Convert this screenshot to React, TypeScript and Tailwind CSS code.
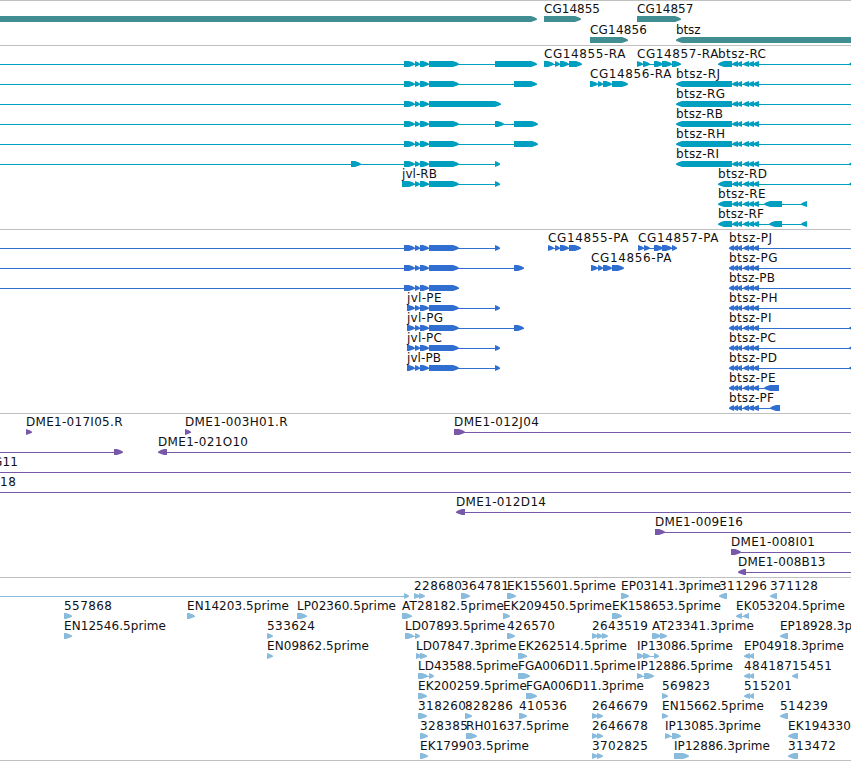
type Label = [start: number, end: number, text: string];
type Span = [start: number, end: number];
interface Row {
  y: number;
  labels?: Label[];
  right?: Span[];
  left?: Span[];
  lines?: Span[];
}
interface TrackData {
  name: string;
  top: number;
  height: number;
  fill: string;
  rows: Row[];
}

const jvl: Span[] = [[415, 420], [420, 429], [429, 459]];
const jvlLong: Span[] = [[404, 415], ...jvl];
const jvlShort: Span[] = [[407, 415], ...jvl];
const btszTail: Span[] = [[743, 749], [748, 754], [753, 759]];
const btszR: Span[] = [[732, 738], [737, 742], ...btszTail];
const btszP: Span[] = [[729, 734], [733, 738], [737, 742], ...btszTail];

const tracks: TrackData[] = [
  {
    name: "genes", top: 0, height: 45, fill: "fill-[#408e92]",
    rows: [
      { y: 19, labels: [[544, 600, "CG14855"], [637, 693.5, "CG14857"]], right: [[-10, 537], [544, 581], [637, 681]] },
      { y: 40, labels: [[590, 647, "CG14856"], [676, 700.5, "btsz"]], right: [[590, 628]], left: [[676, 860]] },
    ],
  },
  {
    name: "transcripts", top: 45, height: 184, fill: "fill-[#009ebf]",
    rows: [
      {
        y: 64,
        labels: [[544, 625.5, "CG14855-RA"], [637, 718.5, "CG14857-RA"], [718, 766, "btsz-RC"]],
        right: [...jvlLong, [495, 537], [544, 554], [555, 560], [560, 569], [569, 582], [637, 643], [643, 650], [654, 663], [662, 672], [672, 681]],
        left: [[718, 732], ...btszR, [849, 858]],
        lines: [[0, 537], [544, 580], [637, 680], [720, 851]],
      },
      {
        y: 84,
        labels: [[590, 671.5, "CG14856-RA"], [676, 720, "btsz-RJ"]],
        right: [...jvlLong, [514, 537], [590, 598], [598, 603], [603, 612], [612, 628]],
        left: [[676, 732], ...btszR],
        lines: [[0, 537], [590, 625], [680, 851]],
      },
      { y: 104, labels: [[676, 725, "btsz-RG"]], right: [[404, 415], [415, 420], [420, 429], [429, 501]], left: [[676, 732], ...btszR], lines: [[0, 498], [680, 851]] },
      { y: 124, labels: [[676, 723, "btsz-RB"]], right: [...jvlLong, [495, 504], [514, 538]], left: [[676, 732], ...btszR], lines: [[0, 537], [680, 851]] },
      { y: 144, labels: [[676, 725, "btsz-RH"]], right: [...jvlLong, [514, 538]], left: [[676, 732], ...btszR], lines: [[0, 537], [680, 851]] },
      { y: 164, labels: [[676, 719, "btsz-RI"]], right: [[351, 361], ...jvlLong, [495, 500]], left: [[676, 732], ...btszR, [849, 858]], lines: [[0, 500], [680, 851]] },
      { y: 184, labels: [[402, 437, "jvl-RB"], [718, 767, "btsz-RD"]], right: [[402, 415], ...jvl, [495, 500]], left: [[718, 732], ...btszR, [849, 858]], lines: [[402, 500], [720, 851]] },
      { y: 204, labels: [[718, 765.5, "btsz-RE"]], left: [[718, 732], ...btszR, [764, 782], [801, 807]], lines: [[720, 807]] },
      { y: 224, labels: [[718, 764, "btsz-RF"]], left: [[718, 732], ...btszR, [769, 782], [801, 807]], lines: [[720, 807]] },
    ],
  },
  {
    name: "proteins", top: 229, height: 184, fill: "fill-[#306ecf]",
    rows: [
      {
        y: 248,
        labels: [[548, 628.5, "CG14855-PA"], [638, 718.5, "CG14857-PA"], [729, 772, "btsz-PJ"]],
        right: [...jvlLong, [495, 500], [548, 554], [555, 560], [560, 569], [569, 581], [638, 644], [644, 650], [654, 663], [662, 672], [672, 677]],
        left: btszP,
        lines: [[0, 500], [548, 580], [638, 676], [730, 851]],
      },
      {
        y: 268,
        labels: [[591, 671.5, "CG14856-PA"], [729, 777.5, "btsz-PG"]],
        right: [...jvlLong, [514, 524], [591, 598], [598, 603], [603, 612], [612, 624]],
        left: btszP,
        lines: [[0, 524], [591, 622], [730, 851]],
      },
      { y: 288, labels: [[729, 775, "btsz-PB"]], right: jvlLong, left: btszP, lines: [[0, 459], [730, 851]] },
      { y: 308, labels: [[407, 441.5, "jvl-PE"], [729, 777.5, "btsz-PH"]], right: [...jvlShort, [495, 500]], left: btszP, lines: [[407, 500], [730, 851]] },
      { y: 328, labels: [[407, 443, "jvl-PG"], [729, 771.5, "btsz-PI"]], right: [...jvlShort, [514, 524]], left: [...btszP, [849, 858]], lines: [[407, 524], [730, 851]] },
      { y: 348, labels: [[407, 442, "jvl-PC"], [729, 776, "btsz-PC"]], right: [...jvlShort, [495, 500]], left: [...btszP, [849, 858]], lines: [[407, 500], [730, 851]] },
      { y: 368, labels: [[407, 441, "jvl-PB"], [729, 777, "btsz-PD"]], right: [...jvlShort, [495, 500]], left: [...btszP, [849, 858]], lines: [[407, 500], [730, 851]] },
      { y: 388, labels: [[729, 775.5, "btsz-PE"]], left: [...btszP, [764, 779]], lines: [[730, 779]] },
      { y: 408, labels: [[729, 774, "btsz-PF"]], left: [...btszP, [770, 780]], lines: [[730, 780]] },
    ],
  },
  {
    name: "clones", top: 413, height: 164, fill: "fill-[#7858a8]",
    rows: [
      { y: 432, labels: [[26, 122.5, "DME1-017I05.R"], [185, 287.5, "DME1-003H01.R"], [454, 539, "DME1-012J04"]], right: [[26, 32], [185, 191], [454, 465]], lines: [[460, 851]] },
      { y: 452, labels: [[158, 248, "DME1-021O10"]], right: [[114, 123]], left: [[158, 167]], lines: [[0, 120], [160, 851]] },
      { y: 472, labels: [[-7, 18, "G11"]], lines: [[0, 851]] },
      { y: 492, labels: [[0, 16, "18"]], lines: [[0, 851]] },
      { y: 512, labels: [[456, 546, "DME1-012D14"]], left: [[456, 465]], lines: [[460, 851]] },
      { y: 532, labels: [[655, 743, "DME1-009E16"]], right: [[655, 665]], lines: [[657, 851]] },
      { y: 552, labels: [[731, 815, "DME1-008I01"]], right: [[731, 741]], lines: [[733, 851]] },
      { y: 572, labels: [[738, 825.5, "DME1-008B13"]], left: [[738, 746]], lines: [[742, 851]] },
    ],
  },
  {
    name: "ests", top: 577, height: 183, fill: "fill-[#88bbdc]",
    rows: [
      {
        y: 596,
        labels: [[414, 462, "228680"], [461, 509, "364781"], [507, 616, "EK155601.5prime"], [621, 721, "EP03141.3prime"], [719, 767, "311296"], [770, 818, "371128"]],
        right: [[404, 409], [414, 420], [419, 425], [461, 470], [507, 516], [621, 629]],
        left: [[719, 727], [770, 777]],
        lines: [[0, 408]],
      },
      {
        y: 616,
        labels: [[64, 112, "557868"], [187, 289, "EN14203.5prime"], [297, 396, "LP02360.5prime"], [402, 504, "AT28182.5prime"], [503, 612, "EK209450.5prime"], [612, 721, "EK158653.5prime"], [736, 845, "EK053204.5prime"]],
        right: [[64, 72], [187, 195], [297, 307], [402, 412], [503, 510], [612, 622]],
        left: [[736, 742], [743, 749]],
        lines: [[738, 748]],
      },
      {
        y: 636,
        labels: [[64, 166, "EN12546.5prime"], [267, 315, "533624"], [405, 505.5, "LD07893.5prime"], [507, 555, "426570"], [592, 648, "2643519"], [652, 754, "AT23341.3prime"], [780, 852, "EP18928.3p"]],
        right: [[64, 72], [267, 273], [405, 414], [415, 420], [507, 515], [592, 598], [597, 603], [602, 608], [652, 661], [660, 667]],
        left: [[780, 788]],
        lines: [[407, 418], [592, 606], [654, 665]],
      },
      {
        y: 656,
        labels: [[267, 369, "EN09862.5prime"], [416, 516.5, "LD07847.3prime"], [518, 627, "EK262514.5prime"], [637, 733, "IP13086.5prime"], [744, 844, "EP04918.3prime"]],
        right: [[267, 273], [416, 422], [420, 427], [518, 527], [637, 644], [643, 650], [654, 659]],
        left: [[744, 750], [749, 754]],
        lines: [[638, 657]],
      },
      {
        y: 676,
        labels: [[418, 518.5, "LD43588.5prime"], [518, 636, "FGA006D11.5prime"], [637, 733, "IP12886.5prime"], [744, 792, "484187"], [792, 832, "15451"]],
        right: [[418, 428], [429, 434], [518, 530], [637, 643], [644, 654]],
        left: [[744, 750], [749, 754], [792, 798]],
        lines: [[420, 432], [638, 652]],
      },
      {
        y: 696,
        labels: [[418, 527, "EK200259.5prime"], [526, 644, "FGA006D11.3prime"], [662, 710, "569823"], [744, 792, "515201"]],
        right: [[418, 427], [526, 537], [662, 668]],
        left: [[744, 750], [749, 754]],
      },
      {
        y: 716,
        labels: [[418, 466, "318260"], [465, 513, "828286"], [519, 567, "410536"], [592, 648, "2646679"], [662, 764, "EN15662.5prime"], [780, 828, "514239"]],
        right: [[418, 427], [465, 472], [519, 527], [592, 598], [597, 603], [662, 668]],
        left: [[780, 788]],
      },
      {
        y: 736,
        labels: [[420, 468, "328385"], [466, 569, "RH01637.5prime"], [592, 648, "2646678"], [665, 761, "IP13085.3prime"], [788, 851, "EK194330"]],
        right: [[420, 428], [466, 477], [592, 598], [597, 603], [665, 671], [672, 681]],
        left: [[788, 798]],
        lines: [[667, 678]],
      },
      {
        y: 756,
        labels: [[420, 529, "EK179903.5prime"], [592, 648, "3702825"], [674, 770, "IP12886.3prime"], [788, 836, "313472"]],
        right: [[420, 428], [592, 598], [597, 603], [674, 689]],
        left: [[788, 798]],
      },
    ],
  },
];

// Feature box whose last few pixels round off to a point in the strand's direction.
function Feature({ span: [a, b], y, left }: { span: Span; y: number; left?: boolean }) {
  const tip = left ? a : b;
  const back = left ? b : a;
  const dir = left ? -1 : 1;
  const head = Math.min(6, b - a);
  const neck = tip - dir * head;
  const mid = tip - dir * head * 0.4;
  return (
    <polygon
      points={`${back},${y - 3} ${neck},${y - 3} ${mid},${y - 1.8} ${tip},${y - 0.3} ${tip},${y + 0.7} ${mid},${y + 1.8} ${neck},${y + 3} ${back},${y + 3}`}
    />
  );
}

function Track({ track }: { track: TrackData }) {
  return (
    <section className="border-t border-[#c0c0c0]" aria-label={track.name}>
      <svg
        className={`block overflow-visible ${track.fill}`}
        width={851}
        height={track.height - 1}
        viewBox={`0 ${track.top + 1} 851 ${track.height - 1}`}
      >
        {track.rows.map((row) => (
          <g key={row.y}>
            {row.lines?.map(([a, b], i) => <rect key={i} x={a} y={row.y} width={b - a} height={1} />)}
            {row.right?.map((s, i) => <Feature key={i} span={s} y={row.y} />)}
            {row.left?.map((s, i) => <Feature key={i} span={s} y={row.y} left />)}
            {row.labels?.map(([a, b, text]) => (
              <text
                key={text}
                x={a}
                y={row.y - 6}
                textLength={b - a}
                className="fill-[#111] font-['DejaVu_Sans',sans-serif] text-[12px]"
              >
                {text}
              </text>
            ))}
          </g>
        ))}
      </svg>
    </section>
  );
}

export default function App() {
  return (
    <main className="flex h-[761px] w-[851px] flex-col overflow-hidden border-b border-[#c0c0c0] bg-white">
      {tracks.map((t) => <Track key={t.name} track={t} />)}
    </main>
  );
}
